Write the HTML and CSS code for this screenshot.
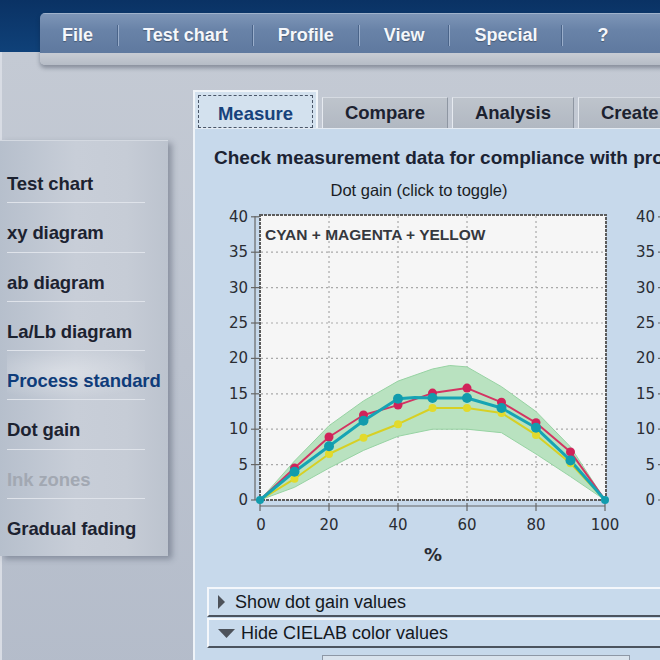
FILE: index.html
```html
<!DOCTYPE html>
<html lang="en">
<head>
<meta charset="utf-8">
<title>Process standard – Dot gain</title>
<link rel="stylesheet" href="styles.css">
</head>
<body>
<div class="app">
  <header class="topbar">
    <nav class="menubar">
      <div class="menu-items">
        <span class="mi first">File</span><span class="sep"></span>
        <span class="mi">Test chart</span><span class="sep"></span>
        <span class="mi">Profile</span><span class="sep"></span>
        <span class="mi">View</span><span class="sep"></span>
        <span class="mi">Special</span><span class="sep"></span>
        <span class="mi last">?</span>
      </div>
      <div class="menu-foot"></div>
    </nav>
  </header>

  <div class="workspace">
    <aside class="side">
      <ul class="sidebar">
        <li>Test chart</li>
        <li>xy diagram</li>
        <li>ab diagram</li>
        <li>La/Lb diagram</li>
        <li class="active">Process standard</li>
        <li>Dot gain</li>
        <li class="disabled">Ink zones</li>
        <li class="last">Gradual fading</li>
      </ul>
    </aside>

    <main class="main">
      <div class="tabs">
        <div class="tab active"><span class="focus">Measure</span></div>
        <div class="tab w126">Compare</div>
        <div class="tab w122">Analysis</div>
        <div class="tab w100">Create</div>
      </div>
      <section class="panel">
        <div class="heading-clip">
          <h1 class="heading">Check measurement data for compliance with process standard</h1>
        </div>
        <svg class="chart" width="446" height="401" viewBox="214 169 446 401" xmlns="http://www.w3.org/2000/svg">
          <text x="419" y="190" class="ct" text-anchor="middle" dominant-baseline="central">Dot gain (click to toggle)</text>

          <rect x="260" y="215" width="346" height="285" fill="#f6f6f6" stroke="#5c5c5c" stroke-width="2" stroke-dasharray="3 1"/>
          <g stroke="#a9a9a9" stroke-width="1.2" stroke-dasharray="2 3">
            <line x1="261" y1="252.2" x2="605" y2="252.2"/>
            <line x1="261" y1="287.6" x2="605" y2="287.6"/>
            <line x1="261" y1="323" x2="605" y2="323"/>
            <line x1="261" y1="358.4" x2="605" y2="358.4"/>
            <line x1="261" y1="393.8" x2="605" y2="393.8"/>
            <line x1="261" y1="429.2" x2="605" y2="429.2"/>
            <line x1="261" y1="464.6" x2="605" y2="464.6"/>
            <line x1="329" y1="216" x2="329" y2="499"/>
            <line x1="398" y1="216" x2="398" y2="499"/>
            <line x1="467" y1="216" x2="467" y2="499"/>
            <line x1="536" y1="216" x2="536" y2="499"/>
          </g>

          <g stroke="#666" stroke-width="1.2">
            <line x1="255" y1="216" x2="255" y2="500"/>
            <line x1="251" y1="216.8" x2="259" y2="216.8"/>
            <line x1="251" y1="252.2" x2="259" y2="252.2"/>
            <line x1="251" y1="287.6" x2="259" y2="287.6"/>
            <line x1="251" y1="323" x2="259" y2="323"/>
            <line x1="251" y1="358.4" x2="259" y2="358.4"/>
            <line x1="251" y1="393.8" x2="259" y2="393.8"/>
            <line x1="251" y1="429.2" x2="259" y2="429.2"/>
            <line x1="251" y1="464.6" x2="259" y2="464.6"/>
            <line x1="251" y1="500" x2="259" y2="500"/>
            <line x1="260" y1="506" x2="605" y2="506"/>
            <line x1="260" y1="503" x2="260" y2="511"/>
            <line x1="329" y1="503" x2="329" y2="511"/>
            <line x1="398" y1="503" x2="398" y2="511"/>
            <line x1="467" y1="503" x2="467" y2="511"/>
            <line x1="536" y1="503" x2="536" y2="511"/>
            <line x1="605" y1="503" x2="605" y2="511"/>
          </g>

          <g class="tick" text-anchor="end" dominant-baseline="central">
            <text x="248" y="217">40</text>
            <text x="248" y="252.2">35</text>
            <text x="248" y="287.6">30</text>
            <text x="248" y="323">25</text>
            <text x="248" y="358.4">20</text>
            <text x="248" y="393.8">15</text>
            <text x="248" y="429.2">10</text>
            <text x="248" y="464.6">5</text>
            <text x="248" y="500">0</text>
          </g>
          <g class="tick" text-anchor="middle" dominant-baseline="central">
            <text x="261" y="525">0</text>
            <text x="329" y="525">20</text>
            <text x="398" y="525">40</text>
            <text x="467" y="525">60</text>
            <text x="536" y="525">80</text>
            <text x="605" y="525">100</text>
          </g>
          <text x="433" y="554" class="unit" text-anchor="middle" dominant-baseline="central">%</text>

          <text x="265" y="234" class="legend" dominant-baseline="central">CYAN + MAGENTA + YELLOW</text>

          <polygon fill="#b9e2c0" stroke="#97d3a3" stroke-width="1" stroke-linejoin="round"
            points="260,500 294.5,461 329,425.7 363.5,400.9 398,381.1 432.5,369 449.75,365.5 467,366.9 501.5,386.7 536,411.5 570.5,446.9 605,500 570.5,476.6 536,454 501.5,432.7 467,429.2 432.5,429.2 398,436.3 363.5,450.4 329,468.1 294.5,487.3"/>

          <polyline fill="none" stroke="#d7d024" stroke-width="2" stroke-linejoin="round"
            points="260,500 294.5,478.8 329,454 363.5,437.7 398,424.2 432.5,408 467,408 501.5,412.9 536,434.9 570.5,463.2 605,500"/>
          <polyline fill="none" stroke="#d43462" stroke-width="2" stroke-linejoin="round"
            points="260,500 294.5,468.1 329,437 363.5,415 398,405.1 432.5,393.1 467,388.1 501.5,402.3 536,422.8 570.5,451.9 605,500"/>
          <polyline fill="none" stroke="#16a4b4" stroke-width="3" stroke-linejoin="round"
            points="260,500 294.5,471.7 329,446.2 363.5,420.7 398,398.8 415,397.4 432.5,398 467,398 501.5,408 536,427.8 570.5,460.4 605,500"/>

          <g fill="#e2da2c">
            <circle cx="294.5" cy="478.8" r="4"/><circle cx="329" cy="454" r="4"/><circle cx="363.5" cy="437.7" r="4"/>
            <circle cx="398" cy="424.2" r="4"/><circle cx="432.5" cy="408" r="4"/><circle cx="467" cy="408" r="4"/>
            <circle cx="501.5" cy="412.9" r="4"/><circle cx="536" cy="434.9" r="4"/><circle cx="570.5" cy="463.2" r="4"/>
          </g>
          <g fill="#d0235a">
            <circle cx="294.5" cy="468.1" r="4.5"/><circle cx="329" cy="437" r="4.5"/><circle cx="363.5" cy="415" r="4.5"/>
            <circle cx="398" cy="405.1" r="4.5"/><circle cx="432.5" cy="393.1" r="4.5"/><circle cx="467" cy="388.1" r="4.5"/>
            <circle cx="501.5" cy="402.3" r="4.5"/><circle cx="536" cy="422.8" r="4.5"/><circle cx="570.5" cy="451.9" r="4.5"/>
          </g>
          <g fill="#119cad">
            <circle cx="260" cy="500" r="4"/><circle cx="605" cy="500" r="4"/>
            <circle cx="294.5" cy="471.7" r="5"/><circle cx="329" cy="446.2" r="5"/><circle cx="363.5" cy="420.7" r="5"/>
            <circle cx="398" cy="398.8" r="5"/><circle cx="432.5" cy="398" r="5"/><circle cx="467" cy="398" r="5"/>
            <circle cx="501.5" cy="408" r="5"/><circle cx="536" cy="427.8" r="5"/><circle cx="570.5" cy="460.4" r="5"/>
          </g>

          <g class="tick" text-anchor="end" dominant-baseline="central">
            <text x="655" y="217">40</text>
            <text x="655" y="252.2">35</text>
            <text x="655" y="287.6">30</text>
            <text x="655" y="323">25</text>
            <text x="655" y="358.4">20</text>
            <text x="655" y="393.8">15</text>
            <text x="655" y="429.2">10</text>
            <text x="655" y="464.6">5</text>
            <text x="655" y="500">0</text>
          </g>
          <g stroke="#666" stroke-width="1.2">
            <line x1="658" y1="216.8" x2="662" y2="216.8"/>
            <line x1="658" y1="252.2" x2="662" y2="252.2"/>
            <line x1="658" y1="287.6" x2="662" y2="287.6"/>
            <line x1="658" y1="323" x2="662" y2="323"/>
            <line x1="658" y1="358.4" x2="662" y2="358.4"/>
            <line x1="658" y1="393.8" x2="662" y2="393.8"/>
            <line x1="658" y1="429.2" x2="662" y2="429.2"/>
            <line x1="658" y1="464.6" x2="662" y2="464.6"/>
            <line x1="658" y1="500" x2="662" y2="500"/>
          </g>
        </svg>

        <div class="disclosure">
          <svg class="arrow-r" width="7" height="14" viewBox="0 0 7 14"><polygon points="0,0 7,7 0,14" fill="#4d525a"/></svg>
          <span>Show dot gain values</span>
        </div>
        <div class="disclosure">
          <svg class="arrow-d" width="17" height="9" viewBox="0 0 17 9"><polygon points="0,0 17,0 8.5,9" fill="#4d525a"/></svg>
          <span>Hide CIELAB color values</span>
        </div>
        <div class="valuebox"></div>
      </section>
    </main>
  </div>
</div>
</body>
</html>
```

FILE: styles.css
```css
* { box-sizing: border-box; }

html, body {
  margin: 0;
  padding: 0;
}

body {
  width: 660px;
  height: 660px;
  overflow: hidden;
  font-family: "Liberation Sans", Arial, sans-serif;
  background: #0d3a6e;
}

.app {
  width: 660px;
  height: 660px;
  overflow: hidden;
  display: flex;
  flex-direction: column;
}

/* ---------- top bar ---------- */
.topbar {
  height: 52px;
  flex: none;
  position: relative;
  z-index: 2;
  background: linear-gradient(180deg, #0a3264 0%, #0f4179 100%);
  padding-top: 13px;
  padding-left: 40px;
}

.menubar {
  width: 640px;
  height: 52px;
  border-radius: 5px 0 0 5px;
  overflow: hidden;
  box-shadow: 0 3px 4px rgba(20, 30, 50, 0.35);
}

.menu-items {
  height: 40px;
  display: flex;
  align-items: center;
  padding: 4px 0 0 22px;
  background: linear-gradient(180deg, #7d95b7 0%, #6983a8 40%, #5f799f 100%);
  border-top: 1px solid #9fb2cc;
}

.mi {
  color: #f5f7fb;
  font-weight: bold;
  font-size: 18px;
  padding: 0 24px;
  text-shadow: 0 1px 1px rgba(0, 0, 0, 0.3);
  white-space: nowrap;
}

.mi.first { padding-left: 0; }
.mi.last { padding-left: 34px; }

.sep {
  width: 2px;
  height: 21px;
  background: #4a6489;
  border-right: 1px solid #9aaecb;
  flex: none;
}

.menu-foot {
  height: 12px;
  background: linear-gradient(180deg, #c8ccd4 0%, #b6bcc6 100%);
}

/* ---------- workspace ---------- */
.workspace {
  flex: 1;
  display: flex;
  background: linear-gradient(180deg, #c4cad4 0%, #bcc3cf 50%, #b4bcca 100%);
  box-shadow: inset 2px 0 0 #d8dce4;
}

.side {
  width: 193px;
  flex: none;
  padding-top: 88px;
}

.sidebar {
  list-style: none;
  margin: 0;
  width: 168px;
  padding: 13px 0 8px 0;
  background: linear-gradient(90deg, #b6bfcc 0%, #c8ced8 45%, #c6ccd6 75%, #bcc3ce 100%);
  box-shadow: 4px 3px 6px rgba(40, 50, 70, 0.35);
  border-top: 1px solid #d4d9e1;
}

.sidebar li {
  height: 49.3px;
  margin: 0 23px 0 7px;
  padding-top: 20px;
  line-height: 20px;
  font-size: 18.5px;
  font-weight: bold;
  letter-spacing: -0.1px;
  color: #1c2230;
  white-space: nowrap;
  border-bottom: 1px solid #dfe3ea;
}

.sidebar li.last { border-bottom: none; }

.sidebar li.active {
  color: #0f3c7a;
  background: radial-gradient(ellipse 70% 55% at 40% 45%, rgba(255, 255, 255, 0.35), rgba(255, 255, 255, 0) 100%);
}

.sidebar li.disabled { color: #a2a8b2; }

/* ---------- main ---------- */
.main {
  flex: 1;
  min-width: 0;
  display: flex;
  flex-direction: column;
  padding-top: 38px;
}

.tabs {
  height: 38px;
  display: flex;
  align-items: flex-end;
  gap: 4px;
  flex: none;
}

.tab {
  height: 31px;
  flex: none;
  display: flex;
  align-items: center;
  justify-content: center;
  font-size: 18.5px;
  font-weight: bold;
  color: #1c2230;
  white-space: nowrap;
  background: linear-gradient(180deg, #bec4cc 0%, #b1b8c2 100%);
  border-top: 1px solid #d6dbe2;
  border-left: 1px solid #e6eaf0;
  border-right: 1px solid #8e96a2;
}

.tab.w126 { width: 126px; }
.tab.w122 { width: 122px; }
.tab.w100 { width: 100px; justify-content: flex-start; padding-left: 22px; }

.tab.active {
  width: 125px;
  height: 38px;
  padding: 3px 3px 0 3px;
  background: #d3e1ee;
  border: 2px solid #f1f5f9;
  border-bottom: none;
  color: #17427b;
}

.focus {
  flex: 1;
  align-self: stretch;
  display: flex;
  align-items: center;
  justify-content: center;
  padding-top: 4px;
  border: 1px dashed #4a5668;
}

.panel {
  flex: 1;
  min-width: 0;
  background: #c7d9eb;
  border-left: 2px solid #eef3f8;
  border-top: 1px solid #e4ebf3;
  padding: 18px 0 0 12px;
  display: flex;
  flex-direction: column;
  align-items: flex-start;
}

.heading-clip {
  align-self: stretch;
  overflow: hidden;
}

.heading {
  margin: 0 0 0 7px;
  font-size: 19px;
  line-height: 22px;
  font-weight: bold;
  color: #1b2333;
  white-space: nowrap;
}

.chart {
  display: block;
  margin-left: 7px;
  flex: none;
}

.chart .ct {
  font-family: "Liberation Sans", Arial, sans-serif;
  font-size: 16.5px;
  fill: #1a1d24;
}

.chart .tick {
  font-family: "DejaVu Sans", Verdana, sans-serif;
  font-size: 15px;
  fill: #2a2d33;
}

.chart .unit {
  font-family: "DejaVu Sans", Verdana, sans-serif;
  font-size: 18px;
  font-weight: bold;
  fill: #2a2d33;
}

.chart .legend {
  font-family: "Liberation Sans", Arial, sans-serif;
  font-size: 15.5px;
  font-weight: bold;
  fill: #35383e;
}

.disclosure {
  width: 470px;
  height: 30px;
  flex: none;
  display: flex;
  align-items: center;
  padding-left: 9px;
  background: #c8daec;
  border-top: 2px solid #f4f7fb;
  border-left: 2px solid #f4f7fb;
  border-bottom: 2px solid #4b535e;
  font-size: 18px;
  color: #14181e;
  white-space: nowrap;
  margin-top: 17px;
}

.disclosure + .disclosure { margin-top: 1px; }

.arrow-r { margin-right: 10px; flex: none; }
.arrow-d { margin-right: 6px; flex: none; }

.valuebox {
  margin: 7px 0 0 115px;
  width: 308px;
  height: 20px;
  flex: none;
  background: #d9e3ed;
  border: 1px solid #8e98a6;
}
```
